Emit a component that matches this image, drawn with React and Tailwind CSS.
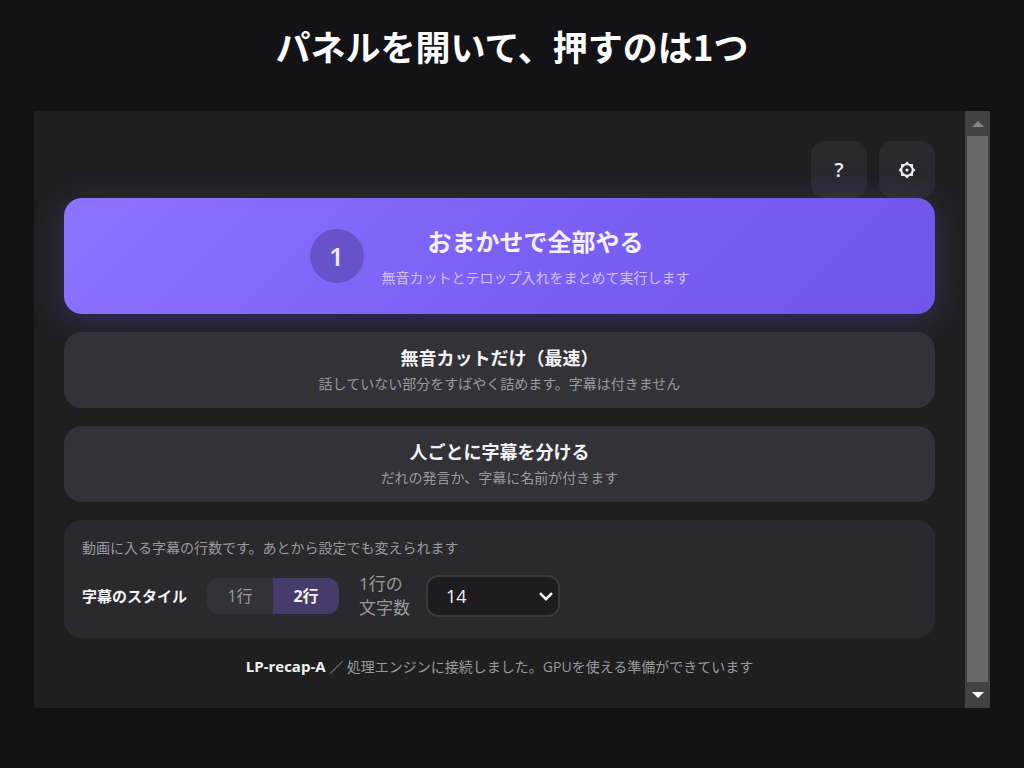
import { useState } from "react";

function GearIcon() {
  return (
    <svg viewBox="0 0 18 18" className="size-[18px]" fill="currentColor" aria-hidden="true">
      <path
        fillRule="evenodd"
        d="M9 .6L11.53 2.9L14.94 3.06L15.1 6.47L17.4 9L15.1 11.53L14.94 14.94L11.53 15.1L9 17.4L6.47 15.1L3.06 14.94L2.9 11.53L.6 9L2.9 6.47L3.06 3.06L6.47 2.9zM9 4.3a4.7 4.7 0 1 0 0 9.4a4.7 4.7 0 1 0 0-9.4z"
      />
      <circle cx="9" cy="9" r="1.6" />
    </svg>
  );
}

function ActionButton({ title, note }) {
  return (
    <button
      type="button"
      className="flex w-full flex-col items-center justify-center rounded-[18px] bg-[#333238] px-4 py-3"
    >
      <span className="text-lg/7 font-bold text-[#f2f2f4]">{title}</span>
      <span className="text-sm/6 text-[#9a999f]">{note}</span>
    </button>
  );
}

function Scrollbar() {
  return (
    <div className="flex w-[25px] shrink-0 flex-col items-center bg-[#424242]" aria-hidden="true">
      <div className="flex h-[25px] items-center justify-center">
        <svg viewBox="0 0 12 6" className="h-[6px] w-3" fill="#858585">
          <path d="M6 0l6 6H0z" />
        </svg>
      </div>
      <div className="w-[21px] flex-1 bg-[#686868]" />
      <div className="flex h-[26px] items-center justify-center">
        <svg viewBox="0 0 12 6" className="h-[6px] w-3" fill="#ffffff">
          <path d="M0 0h12L6 6z" />
        </svg>
      </div>
    </div>
  );
}

export default function App() {
  const [lines, setLines] = useState(2);
  return (
    <main
      lang="ja"
      className="flex min-h-screen flex-col bg-[#121217] px-[34px] pt-[22px] pb-[60px] font-['Open_Sans','Noto_Sans_CJK_JP',sans-serif]"
    >
      <h1 className="text-center font-['Noto_Sans_CJK_JP',sans-serif] text-[35px]/[48px] font-bold text-white">
        パネルを開いて、押すのは1つ
      </h1>

      <section className="mt-[41px] flex flex-1 bg-[#1f1f20]">
        <div className="flex min-w-0 flex-1 flex-col overflow-hidden px-[30px] pt-[30px]">
          <div className="flex justify-end gap-3">
            <button
              type="button"
              aria-label="ヘルプ"
              className="flex h-[57px] w-14 items-center justify-center rounded-[14px] bg-[#2a292e] text-xl font-semibold text-[#ececee]"
            >
              ?
            </button>
            <button
              type="button"
              aria-label="設定"
              className="flex h-[57px] w-14 items-center justify-center rounded-[14px] bg-[#2a292e] text-[#ececee]"
            >
              <GearIcon />
            </button>
          </div>

          <div className="flex flex-col gap-[18px]">
            <button
              type="button"
              className="flex min-h-[116px] w-full items-center justify-center gap-[18px] rounded-[18px] bg-linear-[135deg] from-[#8c73ff] via-[#7c61f6] to-[#6f55ea] px-4 shadow-[0_6px_36px_rgba(124,97,255,0.26)]"
            >
              <span className="flex size-[54px] items-center justify-center rounded-full bg-[#6852cb] text-[26px] font-semibold text-[#f1edff]">
                1
              </span>
              <span className="flex flex-col items-center pt-2">
                <span className="text-2xl/9 font-bold text-[#f3f0ff]">おまかせで全部やる</span>
                <span className="text-sm/9 text-[#cec3fb]">無音カットとテロップ入れをまとめて実行します</span>
              </span>
            </button>

            <ActionButton title="無音カットだけ（最速）" note="話していない部分をすばやく詰めます。字幕は付きません" />
            <ActionButton title="人ごとに字幕を分ける" note="だれの発言か、字幕に名前が付きます" />

            <div className="rounded-[18px] bg-[#2a292e] px-[18px] pt-4 pb-[18px]">
              <p className="text-sm/6 text-[#9a999f]">動画に入る字幕の行数です。あとから設定でも変えられます</p>
              <div className="mt-3 flex items-center gap-5">
                <span id="style-label" className="text-[15px]/6 font-bold text-[#f2f2f4]">
                  字幕のスタイル
                </span>
                <div
                  role="group"
                  aria-labelledby="style-label"
                  className="flex h-9 overflow-hidden rounded-xl bg-[#333238]"
                >
                  {[1, 2].map((n) => (
                    <button
                      key={n}
                      type="button"
                      aria-pressed={lines === n}
                      onClick={() => setLines(n)}
                      className={
                        lines === n
                          ? "w-[66px] bg-[#463c6b] text-base font-bold text-[#f2f2f4]"
                          : "w-[66px] text-base text-[#9a999f]"
                      }
                    >
                      {n}行
                    </button>
                  ))}
                </div>
                <div className="flex items-center gap-4">
                  <label htmlFor="chars" className="text-[17px]/6 text-[#9a999f]">
                    1行の
                    <br />
                    文字数
                  </label>
                  <div className="grid items-center">
                    <select
                      id="chars"
                      defaultValue="14"
                      className="col-start-1 row-start-1 h-[42px] w-[134px] appearance-none rounded-xl border-2 border-[#39383d] bg-[#1d1d1f] px-[18px] text-lg/6 text-[#f2f2f4]"
                    >
                      <option>12</option>
                      <option>14</option>
                      <option>16</option>
                    </select>
                    <svg
                      viewBox="0 0 14 9"
                      className="pointer-events-none col-start-1 row-start-1 mr-[7px] h-[9px] w-3.5 justify-self-end"
                      fill="none"
                      stroke="#ffffff"
                      strokeWidth="2.5"
                      aria-hidden="true"
                    >
                      <path d="M1 1.2l6 6 6-6" />
                    </svg>
                  </div>
                </div>
              </div>
            </div>

            <p className="text-center text-sm/5 text-[#9a999f]">
              <strong className="text-[15px] font-bold text-[#f2f2f4]">LP-recap-A</strong>{" "}
              ／ 処理エンジンに接続しました。GPUを使える準備ができています
            </p>
          </div>
        </div>
        <Scrollbar />
      </section>
    </main>
  );
}
